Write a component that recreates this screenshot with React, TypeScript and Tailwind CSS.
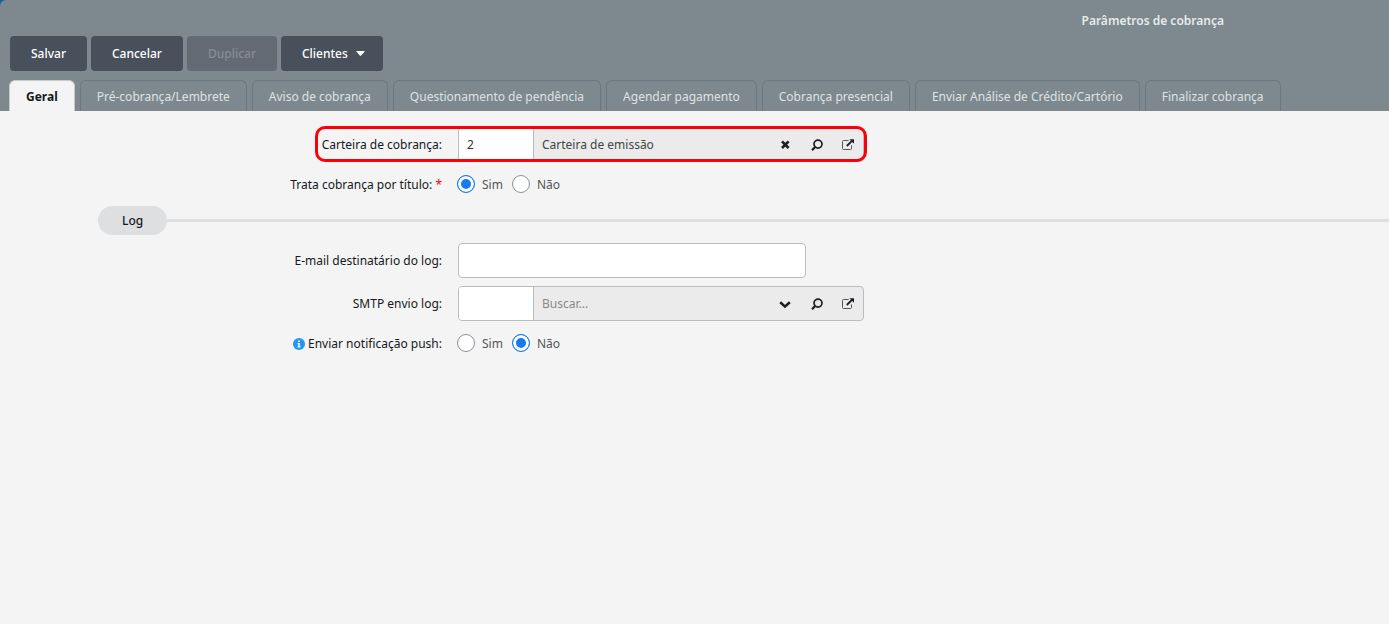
import React, { useState } from 'react';
import clsx from 'clsx';

const TABS = [
  'Geral',
  'Pré-cobrança/Lembrete',
  'Aviso de cobrança',
  'Questionamento de pendência',
  'Agendar pagamento',
  'Cobrança presencial',
  'Enviar Análise de Crédito/Cartório',
  'Finalizar cobrança',
];

const ClearIcon = () => (
  <svg width="11" height="11" viewBox="0 0 11 11" stroke="#1c1f26" strokeWidth="2.7" fill="none">
    <path d="M2 2.4l6.6 6.6M8.6 2.4L2 9" />
  </svg>
);

const ChevronIcon = () => (
  <svg width="13" height="12" viewBox="0 0 13 12" stroke="#1c1f26" strokeWidth="2.6" fill="none">
    <path d="M1.2 4.2L6 8.6l4.8-4.4" />
  </svg>
);

const SearchIcon = () => (
  <svg width="12" height="12" viewBox="0 0 12 12" stroke="#1c1f26" fill="none">
    <circle cx="7" cy="5.1" r="4" strokeWidth="1.7" />
    <path d="M4.1 8L1 11.2" strokeWidth="2.2" />
  </svg>
);

const OpenIcon = () => (
  <svg width="12" height="12" viewBox="0 0 12 12" fill="none">
    <path d="M6.6 1.5H1.5Q0.5 1.5 0.5 2.5v7Q0.5 10.5 1.5 10.5h7Q9.5 10.5 9.5 9.5V6.4" stroke="#56565a" />
    <path d="M4.8 7l5.2-5.2" stroke="#1c1f26" strokeWidth="1.9" />
    <path d="M7.4 0.2H12v4.6z" fill="#1c1f26" />
  </svg>
);

const InfoIcon = () => (
  <svg width="12" height="12" viewBox="0 0 12 12">
    <circle cx="6" cy="6" r="6" fill="#2196f3" />
    <path d="M5.2 2.4h1.6V4H5.2zM4.5 5h2.3v3.3h.8v1.1H4.4V8.3h.8V6.1h-.7z" fill="#fff" />
  </svg>
);

interface FieldProps {
  label: string;
  id: string;
  required?: boolean;
  info?: boolean;
  children: React.ReactNode;
}

const Field: React.FC<FieldProps> = ({ label, id, required, info, children }) => (
  <div className="flex items-center gap-4">
    <label id={`${id}-label`} htmlFor={id} className="flex w-[442px] shrink-0 items-center justify-end gap-[3px] pt-px">
      {info && <InfoIcon />}
      <span>
        {label}
        {required && <span className="text-red-600"> *</span>}
      </span>
    </label>
    {children}
  </div>
);

interface LookupProps {
  id: string;
  code?: string;
  description?: string;
}

const Lookup: React.FC<LookupProps> = ({ id, code = '', description = '' }) => (
  <div className="flex h-[35px] w-[406px] overflow-hidden rounded border border-[#b9bdc2] bg-[#ebebeb]">
    <input
      id={id}
      defaultValue={code}
      className="w-[75px] shrink-0 border-r border-[#b9bdc2] bg-white px-2 text-[#333] outline-none"
    />
    <input
      aria-label="Descrição"
      placeholder="Buscar..."
      defaultValue={description}
      className="min-w-0 flex-1 px-2 text-[#444] outline-none placeholder:text-[#888]"
    />
    <div className="flex">
      <button aria-label={description ? 'Limpar' : 'Abrir lista'} className="flex w-[31px] items-center justify-center">
        {description ? <ClearIcon /> : <ChevronIcon />}
      </button>
      <button aria-label="Pesquisar" className="flex w-[31px] items-center justify-center">
        <SearchIcon />
      </button>
      <button aria-label="Abrir cadastro" className="flex w-[31px] items-center justify-center">
        <OpenIcon />
      </button>
    </div>
  </div>
);

interface YesNoProps {
  id: string;
  initial: string;
}

const YesNo: React.FC<YesNoProps> = ({ id, initial }) => {
  const [value, setValue] = useState(initial);

  return (
    <div role="radiogroup" aria-labelledby={`${id}-label`} className="flex h-[18px] items-center gap-[10px] text-[#555]">
      {['Sim', 'Não'].map((option, index) => (
        <label key={option} className="-ml-px flex items-center gap-[7px]">
          <input
            type="radio"
            id={index === 0 ? id : undefined}
            name={id}
            checked={value === option}
            onChange={() => setValue(option)}
            className="size-[18px] appearance-none rounded-full border border-[#8b929b] bg-white checked:border-[#147bf5] checked:bg-[#147bf5] checked:shadow-[inset_0_0_0_3px_white]"
          />
          <span className="pt-px">{option}</span>
        </label>
      ))}
    </div>
  );
};

const buttonClass = 'h-[35px] rounded bg-[#47505b] font-medium text-white';

const App: React.FC = () => {
  const [activeTab, setActiveTab] = useState('Geral');

  return (
    <div className="min-h-screen bg-[#f4f4f4] font-['Noto_Sans',sans-serif] text-xs text-[#15181c]">
      <div className="bg-[#0d6793]">
        <header className="rounded-tl-md bg-[#7d898e]">
          <h1 className="flex h-9 items-center justify-end pt-1.5 pr-[165px] font-semibold text-[#e8eaeb]">
            Parâmetros de cobrança
          </h1>
          <div className="flex gap-1 px-[10px]">
            <button className={clsx(buttonClass, 'px-[21px]')}>Salvar</button>
            <button className={clsx(buttonClass, 'px-[21px]')}>Cancelar</button>
            <button
              disabled
              className="h-[35px] rounded bg-[#636a74] px-[21px] font-medium text-[#868c97]"
            >
              Duplicar
            </button>
            <button className={clsx(buttonClass, 'flex items-center gap-2 pr-[18px] pl-[21px]')}>
              Clientes
              <svg width="9" height="5" viewBox="0 0 9 5" fill="#fff">
                <path d="M0.8 0h7.4Q9 0 8.5 0.7L5.2 4.4Q4.5 5 3.8 4.4L0.5 0.7Q0 0 0.8 0z" />
              </svg>
            </button>
          </div>
          <div role="tablist" className="mt-[9px] flex gap-[5px] px-[9px]">
            {TABS.map((tab) => (
              <button
                key={tab}
                role="tab"
                aria-selected={tab === activeTab}
                onClick={() => setActiveTab(tab)}
                className={clsx(
                  'h-[31px] rounded-t-md border border-b-0 px-4 pt-px whitespace-nowrap',
                  tab === activeTab
                    ? 'border-[#c5cacc] bg-[#f4f4f4] font-bold text-[#15181c]'
                    : 'border-[#6b787f] text-[#dfe2e4]'
                )}
              >
                {tab}
              </button>
            ))}
          </div>
        </header>
      </div>

      <main className="pt-4">
        <div className="relative">
          <Field id="carteira" label="Carteira de cobrança:">
            <Lookup id="carteira" code="2" description="Carteira de emissão" />
          </Field>
          <div className="pointer-events-none absolute -top-px bottom-0 left-[315px] w-[552px] rounded-[10px] border-3 border-[#fb0007]" />
        </div>

        <div className="mt-[13px]">
          <Field id="titulo" label="Trata cobrança por título:" required>
            <YesNo id="titulo" initial="Sim" />
          </Field>
        </div>

        <div className="mt-[13px] mb-2 ml-[98px] flex items-center">
          <h2 className="flex h-[29px] items-center rounded-full bg-[#dddfe1] px-6 font-medium">Log</h2>
          <div className="h-[3px] flex-1 bg-[#dedfe0]" />
        </div>

        <div className="flex flex-col gap-2">
          <Field id="email" label="E-mail destinatário do log:">
            <input
              id="email"
              type="email"
              className="h-[35px] w-[348px] rounded border border-[#b9bdc2] bg-white px-2 outline-none"
            />
          </Field>
          <Field id="smtp" label="SMTP envio log:">
            <Lookup id="smtp" />
          </Field>
        </div>

        <div className="mt-[13px]">
          <Field id="push" label="Enviar notificação push:" info>
            <YesNo id="push" initial="Não" />
          </Field>
        </div>
      </main>
    </div>
  );
};

export default App;
